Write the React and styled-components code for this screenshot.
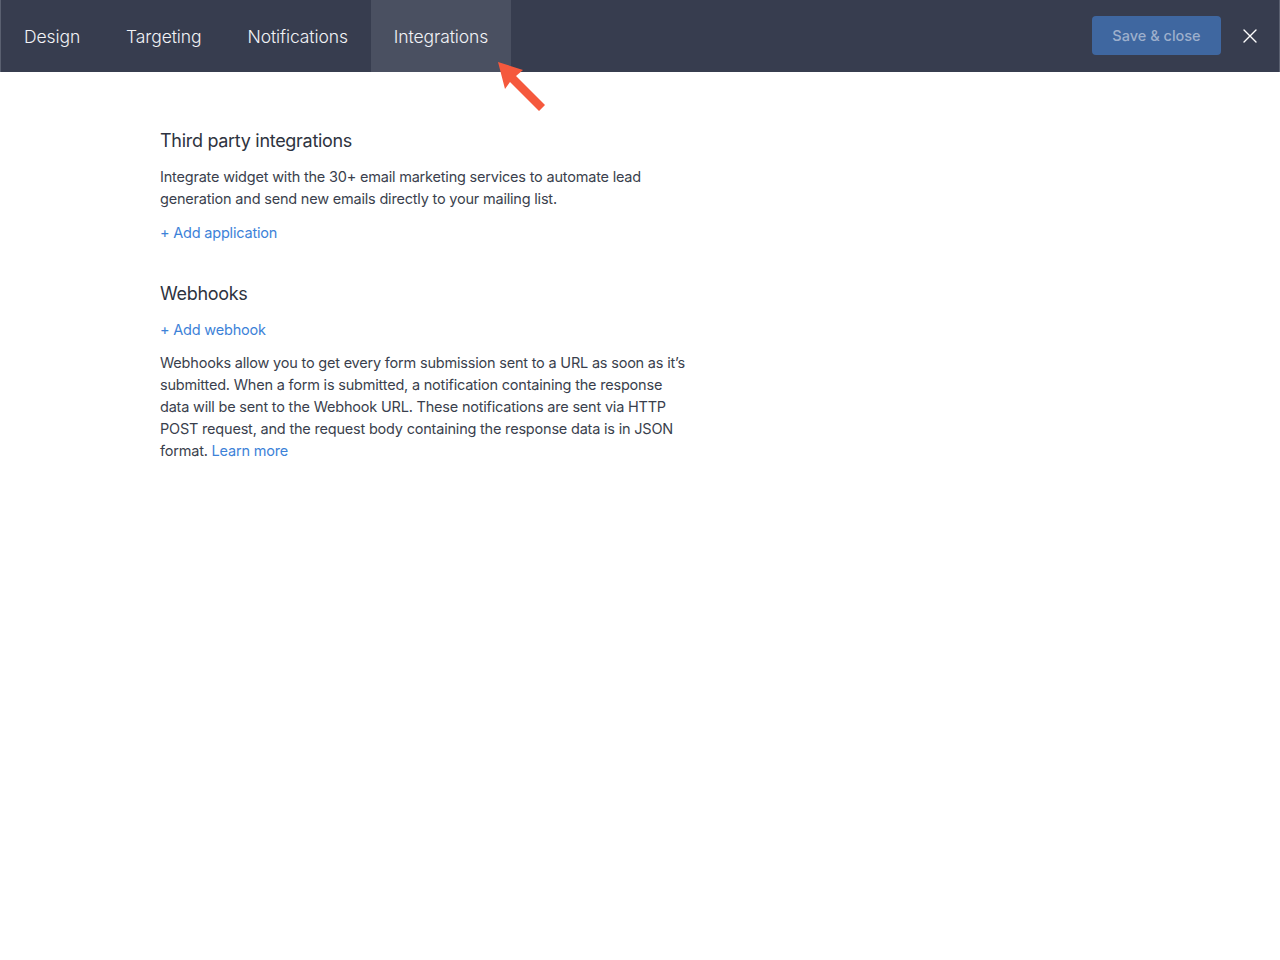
import styled, {createGlobalStyle} from 'styled-components'

const GlobalStyle = createGlobalStyle`
  body {
    margin: 0;
    background: #ffffff;
    font-family: Inter, "Noto Sans", sans-serif;
  }
`

const Page = styled.div`
  min-height: 960px;
  background: #ffffff;
`

const TopBar = styled.header`
  position: relative;
  display: flex;
  align-items: stretch;
  justify-content: space-between;
  height: 72px;
  background-color: #373d4f;
  border-left: 1px solid #5a6070;
  border-right: 1px solid #5a6070;
  box-sizing: border-box;
`

const Tabs = styled.nav`
  display: flex;
`

const Tab = styled.div`
  display: flex;
  align-items: center;
  padding: 0 23px;
  font-size: 17.5px;
  font-weight: 300;
  color: #f2f3f6;
  letter-spacing: -0.1px;
  background-color: ${props => props.active ? '#4a5061' : 'transparent'};
  cursor: pointer;
`

const Actions = styled.div`
  display: flex;
  align-items: center;
  gap: 22px;
  padding-right: 22px;
`

const SaveButton = styled.button`
  width: 129px;
  height: 39px;
  margin-top: -1px;
  border: none;
  border-radius: 4px;
  background-color: #3f67a0;
  color: #9dafcc;
  font-family: Inter, "Noto Sans", sans-serif;
  font-size: 14.5px;
  font-weight: 500;
  cursor: default;
`

const CloseButton = styled.button`
  display: flex;
  padding: 0;
  border: none;
  background: none;
  cursor: pointer;
`

const Pointer = styled.svg`
  position: absolute;
  left: 494px;
  top: 58px;
`

const Content = styled.main`
  width: 530px;
  padding: 56px 0 0 160px;
  color: #3a3f4d;
`

const Section = styled.section`
  margin-bottom: 37px;
`

const Heading = styled.h2`
  margin: 0 0 12px 0;
  font-size: 18px;
  line-height: 26px;
  font-weight: 400;
  color: #2e3340;
  letter-spacing: -0.3px;
`

const Text = styled.p`
  margin: 0 0 12px 0;
  font-size: 14.5px;
  line-height: 22px;
  letter-spacing: -0.2px;
  color: #3a3f4d;
`

const Link = styled.a`
  display: ${props => props.inline ? 'inline' : 'block'};
  margin-bottom: ${props => props.inline ? '0' : '11px'};
  font-size: 14.5px;
  line-height: 22px;
  letter-spacing: -0.2px;
  color: #3d82d8;
  text-decoration: none;
  cursor: pointer;
`

export default function App() {
    return (
        <Page>
            <GlobalStyle/>
            <TopBar>
                <Tabs>
                    <Tab>Design</Tab>
                    <Tab>Targeting</Tab>
                    <Tab>Notifications</Tab>
                    <Tab active>Integrations</Tab>
                </Tabs>
                <Actions>
                    <SaveButton>Save &amp; close</SaveButton>
                    <CloseButton aria-label="close">
                        <svg width="14" height="14" viewBox="0 0 14 14">
                            <path d="M1 1L13 13M13 1L1 13" stroke="#ffffff" strokeWidth="1.4" strokeLinecap="round"/>
                        </svg>
                    </CloseButton>
                </Actions>
                <Pointer width="54" height="56" viewBox="0 0 54 56">
                    <polygon points="3,4 28,12 21,18 50,47 44,53 15,24 10,31" fill="#f5593d"/>
                </Pointer>
            </TopBar>
            <Content>
                <Section>
                    <Heading>Third party integrations</Heading>
                    <Text>
                        Integrate widget with the 30+ email marketing services to automate lead
                        generation and send new emails directly to your mailing list.
                    </Text>
                    <Link>+ Add application</Link>
                </Section>
                <Section>
                    <Heading>Webhooks</Heading>
                    <Link>+ Add webhook</Link>
                    <Text>
                        Webhooks allow you to get every form submission sent to a URL as soon as it’s
                        submitted. When a form is submitted, a notification containing the response
                        data will be sent to the Webhook URL. These notifications are sent via HTTP
                        POST request, and the request body containing the response data is in JSON
                        format. <Link inline>Learn more</Link>
                    </Text>
                </Section>
            </Content>
        </Page>
    )
}
